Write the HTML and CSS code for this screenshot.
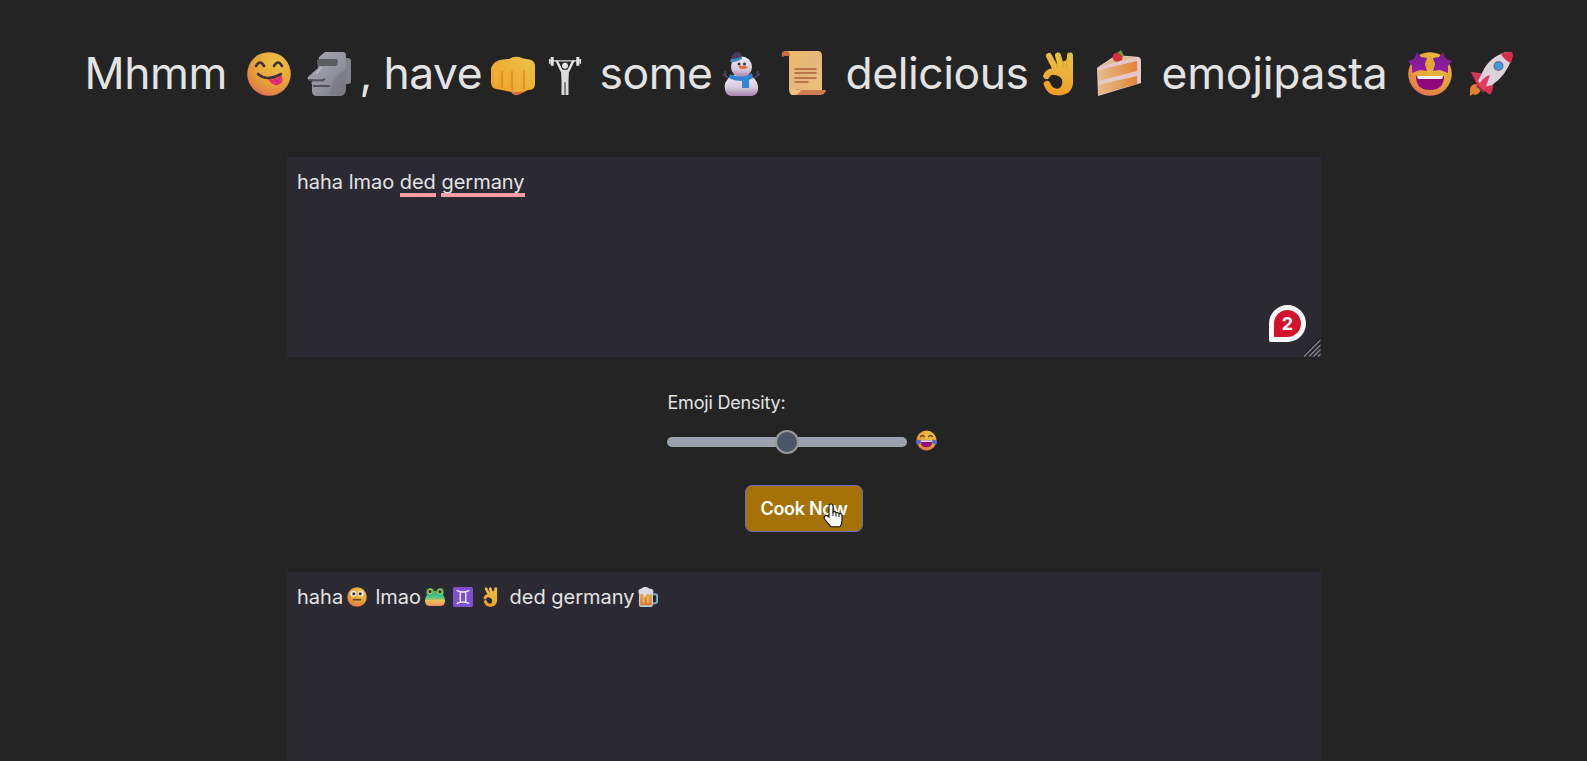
FILE: index.html
```html
<!DOCTYPE html>
<html lang="en">
<head>
<meta charset="utf-8">
<title>Emojipasta</title>
<link rel="stylesheet" href="styles.css">
</head>
<body>
<svg class="defs" aria-hidden="true">
  <defs>
    <radialGradient id="face" cx=".65" cy=".25" r=".9"><stop offset="0" stop-color="#edc146"/><stop offset=".55" stop-color="#e5a238"/><stop offset=".8" stop-color="#e28344"/><stop offset="1" stop-color="#d84f88"/></radialGradient>
    <linearGradient id="stone" x1="0" y1="0" x2="1" y2="1"><stop offset="0" stop-color="#a9a9b2"/><stop offset=".55" stop-color="#94949e"/><stop offset="1" stop-color="#77777f"/></linearGradient>
    <linearGradient id="skin" x1="1" y1="0" x2="0" y2="1"><stop offset="0" stop-color="#ebc44a"/><stop offset="1" stop-color="#f39b23"/></linearGradient>
    <linearGradient id="hand" gradientUnits="userSpaceOnUse" x1="22" y1="4" x2="12" y2="43"><stop offset="0" stop-color="#e8c043"/><stop offset="1" stop-color="#f29d25"/></linearGradient>
    <linearGradient id="snow" x1="0" y1="0" x2="0" y2="1"><stop offset="0" stop-color="#f0ecf5"/><stop offset=".6" stop-color="#d5cbdc"/><stop offset="1" stop-color="#a880ad"/></linearGradient>
    <linearGradient id="paper" x1="0" y1="0" x2="1" y2="1"><stop offset="0" stop-color="#f1b767"/><stop offset=".5" stop-color="#e6b77b"/><stop offset="1" stop-color="#ecc27a"/></linearGradient>
    <linearGradient id="sponge" x1="0" y1="0" x2="1" y2="0"><stop offset="0" stop-color="#e5bd90"/><stop offset="1" stop-color="#e38433"/></linearGradient>
    <linearGradient id="star" x1="0" y1="0" x2="0" y2="1"><stop offset="0" stop-color="#6b1e91"/><stop offset="1" stop-color="#9f1ba5"/></linearGradient>
    <linearGradient id="frogskin" x1="0" y1="0" x2="0" y2="1"><stop offset="0" stop-color="#3bab5c"/><stop offset=".5" stop-color="#45c48c"/><stop offset=".6" stop-color="#8cc377"/><stop offset=".7" stop-color="#ecc552"/><stop offset="1" stop-color="#ee8f68"/></linearGradient>
    <linearGradient id="beer" x1="0" y1="0" x2="0" y2="1"><stop offset="0" stop-color="#e5b044"/><stop offset="1" stop-color="#d9732f"/></linearGradient>
    <symbol id="ok" viewBox="0 0 31 44">
      <path d="M6 4l7 14M15 3.500l4 15M27 3.500l-1 15" stroke="url(#hand)" stroke-width="6" stroke-linecap="round"/>
      <path d="M10 13L30 6V31Q29 43 15 43.500q7-7 4-16-3-6-11-6Z" fill="url(#hand)"/>
      <path d="M3.500 24Q6 18 14 20q8 2 9 9-1 11-9 11-7 0-10-8" fill="none" stroke="url(#hand)" stroke-width="6.500" stroke-linecap="round"/>
      <path d="M11.500 8l3.500 8M19 8l2 8M23.500 7v9" stroke="#d99a2b" stroke-width=".8"/>
    </symbol>
  </defs>
</svg>

<main class="page">
  <h1 class="title">
    <span>Mhmm</span>
    <svg class="emoji" viewBox="0 0 44 44"><circle cx="22" cy="22" r="21.8" fill="url(#face)"/><path d="M22 27q6 2 12-4 3 6 0 8-3 3-6 2-4-1-7-6Z" fill="#e42c77"/><path d="M27 26l4 4" stroke="#b8195f"/><path d="M9 14q4-7 8 0M27 14q4-7 8 0" fill="none" stroke="#45303b" stroke-width="2.6" stroke-linecap="round"/><path d="M11 22q9 8 23 0" fill="none" stroke="#45303b" stroke-width="2.6" stroke-linecap="round"/></svg>
    <svg class="emoji" viewBox="0 0 44 44"><rect x="31" y="6" width="12" height="26" rx="3" fill="#81818a"/><path d="M11 5l6-5h18q3 0 3 4v32q0 8-6 8H9q-5 0-5-5v-7l-1-1 2-2-4-1q-3-2 0-4l9-8Z" fill="url(#stone)"/><path d="M37 18Q23 25 22 43h10q6-1 6-7V17Z" fill="#767680" opacity=".6"/><path d="M12 7h16q2 0 2 3t-2 4H12q-3 0-3-2V9q0-2 3-2Z" fill="#5c5d61"/><path d="M1 28l13 0.500 3-1.500M5 34h17" fill="none" stroke="#57515f" stroke-width="2"/><path d="M14 15l-6 7" fill="none" stroke="#b8b8c1" stroke-width="1.5"/></svg>
    <span>,</span>
    <span>have</span>
    <svg class="emoji" viewBox="0 0 44 44"><path d="M0 16Q3 8 12 7.500l6-.5q6-4 13-1l4 1q8 0 9 6v19q0 6-7 6l-8 4q-6 3-9-2l-9-2-6-1Q-1 36 0 26Z" fill="url(#skin)"/><path d="M20 39q6 3 17-1l-8 4q-6 3-9-3Z" fill="#dc6548"/><path d="M11 19v17M21 19v19M33 18v19" stroke="#d58a27" stroke-width="1.4"/><path d="M5 19v15M15 19v16M27 19v17M38 17v18" stroke="#f0b936" stroke-width="3" opacity=".6"/></svg>
    <svg class="emoji lifter" viewBox="0 5 32 39" preserveAspectRatio="none"><g fill="none" stroke="#e6e6e6"><path d="M1 9h30" stroke-width="1.2"/><path d="M3.2 5v9M28.8 5v9" stroke-width="3"/><path d="M.7 7v5M31.3 7v5" stroke-width="1.5"/><path d="M7.5 8.5L13 20h6l5.5-11.500" stroke-width="2.4"/></g><circle cx="16" cy="14" r="3" fill="#e6e6e6"/><path d="M12 18h8l-.5 12v14h-3V31h-1v13h-3V30Z" fill="#dcdcdc"/></svg>
    <span>some</span>
    <svg class="emoji snowman" viewBox="0 0 37 44"><path d="M7 27L0 22m3 2-1-5M29 27l8-5m-3 2 1-5" stroke="#504460" stroke-width="1.7" fill="none"/><path d="M8 24q10-3 20 0 8 5 7 14-1 5-6 6H8q-5-1-6-6-2-8 6-14Z" fill="url(#snow)"/><circle cx="18.500" cy="15" r="10.500" fill="url(#snow)"/><path d="M7 8l3-6q5-4 8 0l1 4-11 4Z" fill="#4a3c58"/><path d="M8 7q7 0 11-3v3q-6 4-12 3Z" fill="#3f86bc"/><circle cx="16" cy="12" r="1.5" fill="#35303d"/><circle cx="21.500" cy="12" r="1.5" fill="#35303d"/><path d="M16 14q7-1 9 2-6 2-9 0Z" fill="#df6c36"/><path d="M7 22q11 6 22-1l1 5-4 2v8h-7v-7Q11 29 6 26Z" fill="#3185d2"/></svg>
    <svg class="emoji scroll" viewBox="0 0 44 45"><path d="M3 0h34q3 1 3 5v34H15q0 5-5 5-3-1-3-6V5H0Q-1 1 3 0Z" fill="url(#paper)"/><path d="M0 6V3q1-3 5-3 3 1 3 5H3Z" fill="#c76a43"/><path d="M19 39h25q-1 5-6 5H10q4-1 5-6Z" fill="#d27d51"/><path d="M8 39q0 5 4 5 5 0 7-5Z" fill="#edc483"/><path d="M12.500 18h22M12.500 22h22M12.500 27h22M12.500 31h14" stroke="#a85f3b" stroke-width="1.6"/></svg>
    <span>delicious</span>
    <svg class="emoji ok"><use href="#ok"/></svg>
    <svg class="emoji cake" viewBox="0 0 44 46"><path d="M0 18L19 5l23 2q2 1 2 4v22L1 46Z" fill="#e4c8ca"/><path d="M1 17L19 6l21 1Z" fill="#ddbd91"/><path d="M1 20l39-9v10L1 31ZM1 35l39-9v8L1 45Z" fill="url(#sponge)"/><path d="M20 3l4-3 3 6-4 2Z" fill="#62a532"/><path d="M16 6q1-4 5-3 6 2 4 7-7 4-9-1-1-1 0-3Z" fill="#d72e3b"/></svg>
    <span>emojipasta</span>
    <svg class="emoji" viewBox="0 0 44 44"><circle cx="22" cy="22" r="21.800" fill="url(#face)"/><ellipse cx="22" cy="11" rx="4.500" ry="7" fill="#e5a634"/><path d="M9 0l4 5 6 1-2 6 2 7-7-1-8 3 0-7-4-5 6-2ZM35 0l-4 5-6 1 2 6-2 7 7-1 8 3 0-7 4-5-6-2Z" fill="url(#star)"/><path d="M8 24h28q0 14-14 14T8 24Z" fill="#8f087e"/><path d="M9 24h26l-1 3H10Z" fill="#eee"/></svg>
    <svg class="emoji" viewBox="0 0 44 44"><path d="M1 44V37q1-5 6-5l5 5q-1 5-6 6l-2-1Z" fill="#df812e"/><path d="M11 21l-9-1 6 13 13 10q4-5 3-15Z" fill="#d73557"/><path d="M13 21Q20 5 37 0h5q2 1 1 6Q37 24 23 33l-8 2-6-6Z" fill="#dcd2da"/><path d="M32 2l6-2q6-1 6 3l-2 8Q36 9 32 2Z" fill="#d82d48"/><path d="M21 23q-8 2-12 12l6 5q3-8 6-17Z" fill="#e43d62"/><path d="M8 34l7 6" stroke="#74354f" stroke-width="2"/><circle cx="29.500" cy="14" r="5" fill="#63738b"/><circle cx="29.500" cy="14" r="3.700" fill="#3d9be4"/></svg>
  </h1>

  <section class="box input">
    <p class="line">haha lmao <span class="typo">ded</span> <span class="typo">germany</span></p>
    <div class="badge"><span>2</span></div>
    <svg class="grip" viewBox="0 0 18 18"><path d="M1 17.500L17.500 1M6 17.500L17.500 6M10.500 17.500l7-7M15 17.500l2.500-2.500" stroke="#8b8b90" stroke-width="1.100"/><path d="M0 16.500L16.500 0M5 16.500L16.500 5" stroke="#17171b" stroke-width="1"/></svg>
  </section>

  <section class="controls">
    <label class="label">Emoji Density:</label>
    <div class="density">
      <div class="track"><div class="thumb"></div></div>
      <svg class="mini" viewBox="0 0 44 44"><circle cx="22" cy="22" r="21" fill="url(#face)"/><path d="M9 15q4-7 9 0M26 15q4-7 9 0" fill="none" stroke="#6b4228" stroke-width="3"/><path d="M9 22h26q0 14-13 14T9 22Z" fill="#8f087e"/><path d="M10 22h24v3H10Z" fill="#eee"/><path d="M0 27q0-6 9-7 2 8-4 10-4 1-5-3ZM44 27q0-6-9-7-2 8 4 10 4 1 5-3Z" fill="#3f70d4"/></svg>
    </div>
  </section>

  <button class="cook">Cook Now
    <svg class="cursor" viewBox="0 0 20 25"><path d="M6 14V3q0-2 2-2t2 2v6q2-1 3 .8 2-1 3 1 3-.8 3 2v5q0 3-2 6H8Q5 20 1.500 16q-1-2 .5-3t4 1Z" fill="#fff" stroke="#111" stroke-width="1.100"/><path d="M10 8.500V13M13 10v3.500M16 11v3" stroke="#111" stroke-width="1"/></svg>
  </button>

  <section class="box output">
    <p class="result">
      <span>haha</span>
      <svg class="mini" viewBox="0 0 44 44"><circle cx="22" cy="22" r="21.500" fill="url(#face)"/><circle cx="14" cy="15" r="6.500" fill="#f3eee9"/><circle cx="30" cy="15" r="6.500" fill="#f3eee9"/><circle cx="15" cy="15" r="3.500" fill="#40303a"/><circle cx="29" cy="15" r="3.500" fill="#40303a"/><path d="M13 28h18" stroke="#6b4033" stroke-width="3.500"/></svg>
      <span>lmao</span>
      <svg class="mini" viewBox="0 0 44 44"><path d="M3 12Q3 2 12 2q6 0 8 6h5q2-6 8-6 9 0 8 11l-1 5q4 5 4 12 0 12-11 12H11Q0 42 0 30q0-7 4-12Z" fill="url(#frogskin)"/><circle cx="11" cy="10" r="5.500" fill="#dfc13d"/><circle cx="33" cy="10" r="5.500" fill="#dfc13d"/><circle cx="11" cy="10" r="3.500" fill="#303329"/><circle cx="33" cy="10" r="3.500" fill="#303329"/></svg>
      <svg class="mini" viewBox="0 0 44 44"><rect width="44" height="44" rx="4" fill="#8051cc"/><path d="M9 8q13 6 26 0M9 36q13-6 26 0M16 11v22M28 11v22" fill="none" stroke="#eee6f5" stroke-width="3.200" stroke-linecap="round"/></svg>
      <svg class="mini ok-small"><use href="#ok"/></svg>
      <span>ded germany</span>
      <svg class="mini" viewBox="0 0 44 44"><path d="M31 16h7q4 0 4 4v11q0 5-6 5h-5" fill="none" stroke="#86adc5" stroke-width="4"/><path d="M2 10h31v29q0 5-5 5H7q-5 0-5-5Z" fill="#b9c7d1"/><path d="M5 14h25v26H5Z" fill="url(#beer)"/><path d="M12 21v15M22 21v15" stroke="#edbc72" stroke-width="3"/><path d="M1 12Q0 4 7 4q3-5 10-4 5 0 8 4 8-1 9 5 0 7-6 7H18v4q-3 3-6 0v-4H6q-4 0-5-4Z" fill="#ded9e3"/></svg>
    </p>
  </section>
</main>
</body>
</html>
```
FILE: styles.css
```css
* { box-sizing: border-box; }

body {
  margin: 0;
  height: 761px;
  overflow: hidden;
  background: #242424;
  color: #e3e3e3;
  font-family: Inter, "Noto Sans", sans-serif;
}

.defs { position: absolute; width: 0; height: 0; }

.page {
  display: flex;
  flex-direction: column;
  align-items: center;
  width: 1608px;
}

.title {
  display: grid;
  grid-template-columns: 162.5px 61px 51.5px 24px 107.5px 58.5px 50px 123px 59px 64px 197px 54px 65px 246.5px 61px 44px;
  width: 100%;
  height: 73px;
  margin: 37px 0 47px;
  padding-left: 84.5px;
  font-size: 44.4px;
  font-weight: 400;
  letter-spacing: -0.45px;
  line-height: 73px;
  white-space: nowrap;
}

.title span:last-of-type { letter-spacing: -0.25px; }

.emoji { width: 44px; height: 44px; margin-top: 15px; overflow: visible; }
.lifter { width: 32px; height: 38px; margin-top: 20px; margin-left: -1px; }
.snowman { width: 37px; }
.scroll { height: 45px; margin-top: 14px; }
.ok { width: 31px; }
.cake { height: 46px; margin-top: 13px; }

.box {
  position: relative;
  width: 1034px;
  height: 200px;
  padding: 10px;
  background: #2b2a33;
  font-size: 20px;
  line-height: 30px;
}

.line, .result { margin: 0; white-space: nowrap; }
.line { letter-spacing: -0.02px; }

.typo {
  padding-bottom: 3px;
  background: linear-gradient(#ff9aaa, #ff9aaa) left bottom / 100% 4px no-repeat;
}

.badge {
  position: absolute;
  right: 15px;
  bottom: 15px;
  width: 37px;
  height: 37px;
  border: 5px solid #fff;
  border-radius: 50% 50% 50% 2px;
  background: #d3122e;
  color: #fff;
  font-size: 18px;
  font-weight: 700;
  line-height: 27px;
  text-align: center;
}

.grip { position: absolute; right: 0; bottom: 0; width: 18px; height: 18px; }

.controls { width: 272px; margin: 32px 3px 0 0; }

.label { display: block; padding-left: 1px; font-size: 18px; letter-spacing: -0.2px; line-height: 28px; }

.density { display: flex; align-items: center; gap: 9px; height: 24px; margin-top: 13px; }

.track {
  display: flex;
  align-items: center;
  justify-content: center;
  width: 240px;
  height: 10px;
  border-radius: 5px;
  background: #9ca3af;
}

.thumb {
  flex: none;
  width: 24px;
  height: 24px;
  border: 2px solid #999;
  border-radius: 50%;
  background: #4b5563;
}

.mini { width: 20px; height: 20px; overflow: visible; }
.density .mini { width: 21px; height: 21px; margin-top: -4px; }

.cook {
  position: relative;
  width: 118px;
  height: 47px;
  margin: 31px 0 40px;
  padding: 0;
  border: 1px solid #716bb3;
  border-radius: 7px;
  background: #a57208;
  color: #fff;
  font: 600 18px/45px Inter, sans-serif;
  letter-spacing: -0.3px;
}

.cursor { position: absolute; left: 77px; top: 17px; width: 20px; height: 25px; }

.output { height: 189px; }

.result {
  display: grid;
  grid-template-columns: 50px 28.5px 49.5px 28px 30px 26.5px 128px 20px;
}

.result .mini { margin-top: 5px; }
.result .ok-small { width: 15px; }
```
